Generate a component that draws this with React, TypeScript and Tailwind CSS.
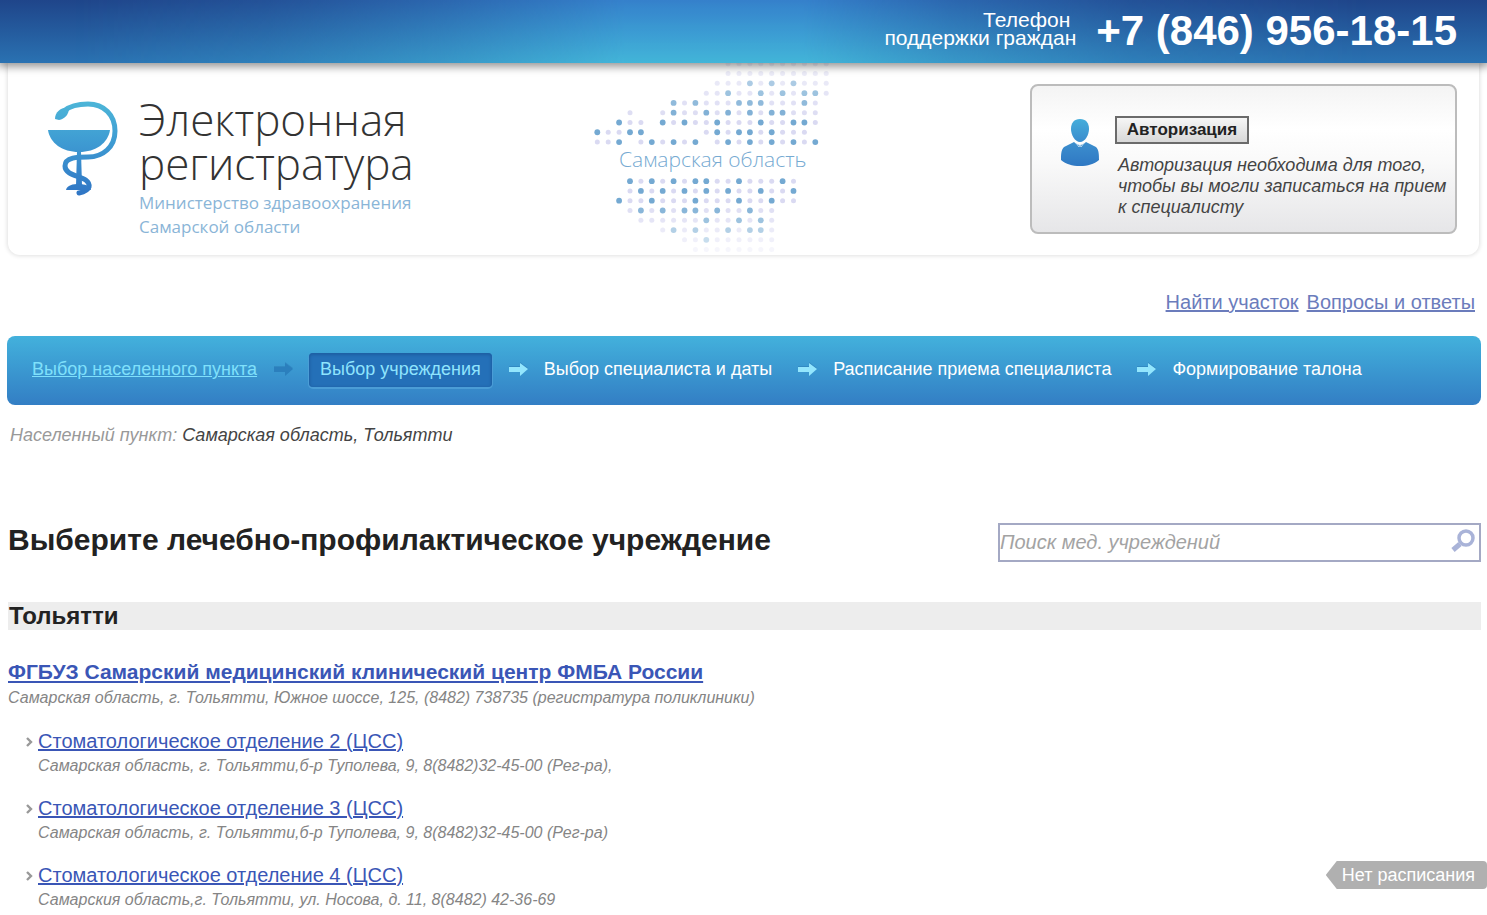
import { Fragment } from "react";

const mapRows = [
  "            ..........",
  "            ..........",
  "           ...o.o.o...",
  "          ..o..o.o.oo.",
  "       o.o...ooo...o.",
  "   .  .o..o.o.o.oo...",
  "  o.. o.o..o...o..oo.",
  "o..oo     .o.oo.o...",
  "..o .o.o.o .o.o.o.o.o",
  "",
  "",
  "",
  "   o.o.o.oo..o...o.",
  "   .o.o.o.o.o..o..o",
  "  o..o...o...o..o..",
  "   .o.o.oo.o..o..",
  "    ......o..o.o.",
  "      .o.o..o.oo.",
  "        ..o......",
  "         ........",
];

const steps = [
  { title: "Выбор населенного пункта", state: "done" },
  { title: "Выбор учреждения", state: "current" },
  { title: "Выбор специалиста и даты", state: "next" },
  { title: "Расписание приема специалиста", state: "next" },
  { title: "Формирование талона", state: "next" },
];

const departments = [
  {
    title: "Стоматологическое отделение 2 (ЦСС)",
    address: "Самарская область, г. Тольятти,б-р Туполева, 9, 8(8482)32-45-00 (Рег-ра),",
    noSchedule: false,
  },
  {
    title: "Стоматологическое отделение 3 (ЦСС)",
    address: "Самарская область, г. Тольятти,б-р Туполева, 9, 8(8482)32-45-00 (Рег-ра)",
    noSchedule: false,
  },
  {
    title: "Стоматологическое отделение 4 (ЦСС)",
    address: "Самарския область,г. Тольятти, ул. Носова, д. 11, 8(8482) 42-36-69",
    noSchedule: true,
  },
];

function rowOpacity(row: number) {
  if (row < 6) return 0.4 + row * 0.1;
  if (row > 14) return 1 - (row - 14) * 0.15;
  return 1;
}

function BowlLogo() {
  return (
    <svg width="72" height="96" viewBox="0 0 72 96" fill="none" aria-hidden="true">
      <defs>
        <linearGradient id="bowl" x1="0" y1="0" x2="0" y2="96" gradientUnits="userSpaceOnUse">
          <stop offset="0" stopColor="#4db6d8" />
          <stop offset="0.4" stopColor="#3f9dd3" />
          <stop offset="1" stopColor="#2f74c4" />
        </linearGradient>
      </defs>
      <path d="M0 29H62C60 42 48 51 31 51C14 51 2 42 0 29Z" fill="url(#bowl)" />
      <path d="M29 50H33L34 85H28Z" fill="url(#bowl)" />
      <path
        d="M16 10C23 4 31 3 40 3C56 3 67 14 67 30C67 46 55 56 40 56C30 56 17 56 17 65C17 77 43 74 41 86C40 89 36 91 31 92"
        stroke="url(#bowl)"
        strokeWidth="5"
        strokeLinecap="round"
      />
      <path d="M7 18C7 11 13 6 21 7C21 13 17 18 11 19Z" fill="url(#bowl)" />
      <path d="M18 89C19 84 25 83 31 83C37 83 42 85 43 89Z" fill="url(#bowl)" />
    </svg>
  );
}

function RegionMap() {
  return (
    <svg width="245" height="192" viewBox="0 0 245 192" role="img" aria-label="Самарская область">
      {mapRows.map((cells, row) =>
        cells.split("").map((cell, col) =>
          cell === " " ? null : (
            <circle
              key={`${row}-${col}`}
              cx={6.3 + col * 10.9}
              cy={0.8 + row * 9.78}
              r={cell === "o" ? 2.9 : 2.5}
              fill={cell === "o" ? "#74a9d2" : "#dadaf2"}
              opacity={rowOpacity(row)}
            />
          )
        )
      )}
      <text x="28" y="104" fontSize="21" fontWeight="300" fill="#76aad2" fontFamily="'Open Sans', sans-serif">
        Самарская область
      </text>
    </svg>
  );
}

function UserIcon() {
  return (
    <svg width="38" height="47" viewBox="0 0 38 47" aria-hidden="true">
      <defs>
        <linearGradient id="user" x1="0" y1="0" x2="0" y2="1">
          <stop offset="0" stopColor="#45aedb" />
          <stop offset="1" stopColor="#3a8bcd" />
        </linearGradient>
        <linearGradient id="body" x1="0" y1="0" x2="0" y2="1">
          <stop offset="0" stopColor="#3c8fce" />
          <stop offset="1" stopColor="#2f78c3" />
        </linearGradient>
      </defs>
      <path d="M19 0C25 0 28 4 28 10C28 16 24 23 19 23C14 23 10 16 10 10C10 4 13 0 19 0Z" fill="url(#user)" />
      <path d="M13 23C15 25 17 26 19 26C21 26 23 25 25 23L35 28C38 31 38 36 38 41C33 45 27 47 19 47C11 47 5 45 0 41C0 36 0 31 3 28Z" fill="url(#body)" />
      <path d="M15 24L18 28L19 26L20 28L23 24" fill="none" stroke="#d5e8f5" strokeWidth="0.8" />
    </svg>
  );
}

function Arrow({ dark }: { dark: boolean }) {
  return (
    <svg
      width="19"
      height="15"
      viewBox="0 0 19 15"
      aria-hidden="true"
      className={dark ? "text-[#2b7fbd]" : "text-[#93e6fd]"}
    >
      <path d="M0 4H11V0L19 6L11 13V9H0Z" fill="#2b7fb8" opacity="0.6" />
      <path d="M0 5H11V1L19 7L11 14V10H0Z" fill="currentColor" />
    </svg>
  );
}

function Header() {
  return (
    <header>
      <div className="relative flex h-[63px] items-start justify-end gap-5 bg-linear-to-b from-[#1f458a] to-[#2a72b2] pr-[30px] text-white shadow-[0_2px_8px_2px_#00000066]">
        <div className="absolute inset-0 bg-linear-to-b from-[#3785d0] to-[#45badb] [mask-image:linear-gradient(to_right,transparent_5%,#00000033_18%,#00000088_30%,#000000ee_42%,#000000ee_54%,#00000088_64%,#00000033_76%,transparent_92%)]" />
        <p className="relative pt-[11px] text-right text-[21px] leading-[18px]">
          <span className="pr-[6px]">Телефон</span>
          <br />
          поддержки граждан
        </p>
        <p className="relative pt-[6px] text-[42px] leading-[50px] font-bold whitespace-nowrap">+7 (846) 956-18-15</p>
      </div>

      <div className="mx-2 flex items-start rounded-b-xl bg-white pr-[22px] pl-10 shadow-[0_0_4px_1px_#0000001f]">
        <a href="#" className="flex shrink-0 gap-[19px] pt-[38px] font-['Open_Sans',sans-serif]">
          <BowlLogo />
          <span className="flex flex-col">
            <span className="-mt-1 text-[44px] leading-[44px] font-light text-[#333333]">
              Электронная
              <br />
              регистратура
            </span>
            <span className="pt-[6px] text-[17px] leading-6 text-[#8ab5d7]">
              Министерство здравоохранения
              <br />
              Самарской области
            </span>
          </span>
        </a>

        <div className="flex flex-1 justify-center pr-4">
          <RegionMap />
        </div>

        <section className="mt-[21px] flex h-[150px] w-[427px] shrink-0 rounded-lg border-2 border-[#bcbcbc] bg-[linear-gradient(#f4f4f4,#ffffff_30%,#fafafa_50%,#e6e6e8)] pt-[30px] pl-[29px]">
          <div className="pt-[3px]">
            <UserIcon />
          </div>
          <div className="pl-4">
            <button
              type="button"
              className="h-7 w-[134px] border-2 border-[#6b6b6b] bg-linear-to-b from-[#f6f6f6] to-[#d8d8d8] text-[17px] leading-6 font-bold text-[#222222]"
            >
              Авторизация
            </button>
            <p className="pt-[11px] pl-[3px] text-[18px] leading-[21px] whitespace-nowrap text-[#444444] italic">
              Авторизация необходима для того,
              <br />
              чтобы вы могли записаться на прием
              <br />к специалисту
            </p>
          </div>
        </section>
      </div>
    </header>
  );
}

function Steps() {
  return (
    <ol className="flex h-[69px] items-center rounded-lg bg-linear-to-b from-[#43b1dc] to-[#337ec4] pb-[2px] pl-[25px] text-[18px] whitespace-nowrap text-white">
      {steps.map((step, index) => (
        <Fragment key={step.title}>
          {index > 0 && (
            <li className={index > 2 ? "pr-4 pl-[26px]" : "pr-4 pl-[17px]"} aria-hidden="true">
              <Arrow dark={index === 1} />
            </li>
          )}
          <li>
            {step.state === "done" && (
              <a href="#" className="text-[#7fe0fb] underline">
                {step.title}
              </a>
            )}
            {step.state === "current" && (
              <span
                aria-current="step"
                className="flex h-[34px] items-center rounded-sm bg-[#2470b8] px-[11px] text-[#8fe4fd] shadow-[inset_0_1px_3px_1px_#1d5fa3,0_1px_0_1px_#4b9dd6]"
              >
                {step.title}
              </span>
            )}
            {step.state === "next" && <span>{step.title}</span>}
          </li>
        </Fragment>
      ))}
    </ol>
  );
}

export default function App() {
  return (
    <div className="min-h-screen overflow-x-hidden bg-white font-['Liberation_Sans',Arial,sans-serif] text-[#222222]">
      <Header />

      <main className="pr-[6px] pl-[7px]">
        <nav className="flex justify-end gap-2 pt-[33px] pr-[6px] text-[20px] leading-7 text-[#6b7cbc]">
          <a href="#" className="underline">Найти участок</a>
          <a href="#" className="underline">Вопросы и ответы</a>
        </nav>

        <div className="pt-5">
          <Steps />
        </div>

        <p className="pt-[18px] pl-[3px] text-[18px] leading-6 text-[#999999] italic">
          Населенный пункт: <span className="text-[#444444]">Самарская область, Тольятти</span>
        </p>

        <div className="flex items-start justify-between pt-[76px] pl-px">
          <h1 className="text-[30px] leading-[34px] font-bold">Выберите лечебно-профилактическое учреждение</h1>
          <form className="flex h-[39px] w-[483px] border-2 border-[#a4a9c4]">
            <input
              type="search"
              aria-label="Поиск мед. учреждений"
              placeholder="Поиск мед. учреждений"
              className="min-w-0 flex-1 pb-[2px] text-[20px] italic outline-none placeholder:text-[#a3a3a3]"
            />
            <button type="button" aria-label="Найти" className="pr-1 pb-1">
              <svg width="24" height="24" viewBox="0 0 24 24" fill="none" stroke="#a9b3d8">
                <circle cx="15" cy="9" r="7" strokeWidth="3.5" />
                <path d="M9 15L2 21" strokeWidth="5" />
              </svg>
            </button>
          </form>
        </div>

        <h2 className="mt-10 ml-px bg-[#ededed] pl-px text-[24px] leading-7 font-bold">Тольятти</h2>

        <section className="pt-7 pl-px">
          <h3 className="text-[21px] leading-7 font-bold">
            <a href="#" className="text-[#3a56b6] underline">
              ФГБУЗ Самарский медицинский клинический центр ФМБА России
            </a>
          </h3>
          <p className="text-[16px] leading-6 text-[#858585] italic">
            Самарская область, г. Тольятти, Южное шоссе, 125, (8482) 738735 (регистратура поликлиники)
          </p>

          <ul className="flex flex-col gap-[18px] pt-[17px] pl-[17px]">
            {departments.map((item) => (
              <li key={item.title} className="flex items-start justify-between">
                <div className="flex">
                  <svg width="13" height="28" viewBox="0 0 13 28" fill="none" aria-hidden="true">
                    <path d="M2 11L6 15L2 19" stroke="#999999" strokeWidth="2.4" />
                  </svg>
                  <div>
                    <a href="#" className="block text-[20px] leading-7 text-[#3a56b6] underline">{item.title}</a>
                    <p className="text-[16px] leading-[21px] text-[#858585] italic">{item.address}</p>
                  </div>
                </div>
                {item.noSchedule && (
                  <span className="-mr-[6px] h-7 rounded-r-sm bg-[#b0b0b0] pr-3 pl-4 text-[18px] leading-7 text-white [clip-path:polygon(0_50%,11px_0,100%_0,100%_100%,11px_100%)]">
                    Нет расписания
                  </span>
                )}
              </li>
            ))}
          </ul>
        </section>
      </main>
    </div>
  );
}
